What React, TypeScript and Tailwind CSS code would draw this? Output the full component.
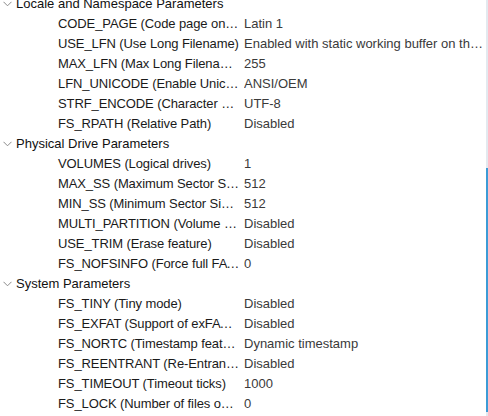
import React from 'react';

type Param = { name: string; value: string };
type Group = { title: string; items: Param[] };

const groups: Group[] = [
  {
    title: 'Locale and Namespace Parameters',
    items: [
      { name: 'CODE_PAGE (Code page on disk)', value: 'Latin 1' },
      { name: 'USE_LFN (Use Long Filename)', value: 'Enabled with static working buffer on the BSS' },
      { name: 'MAX_LFN (Max Long Filename)', value: '255' },
      { name: 'LFN_UNICODE (Enable Unicode)', value: 'ANSI/OEM' },
      { name: 'STRF_ENCODE (Character encoding)', value: 'UTF-8' },
      { name: 'FS_RPATH (Relative Path)', value: 'Disabled' },
    ],
  },
  {
    title: 'Physical Drive Parameters',
    items: [
      { name: 'VOLUMES (Logical drives)', value: '1' },
      { name: 'MAX_SS (Maximum Sector Size in bytes)', value: '512' },
      { name: 'MIN_SS (Minimum Sector Size in bytes)', value: '512' },
      { name: 'MULTI_PARTITION (Volume partitions)', value: 'Disabled' },
      { name: 'USE_TRIM (Erase feature)', value: 'Disabled' },
      { name: 'FS_NOFSINFO (Force full FAT scan)', value: '0' },
    ],
  },
  {
    title: 'System Parameters',
    items: [
      { name: 'FS_TINY (Tiny mode)', value: 'Disabled' },
      { name: 'FS_EXFAT (Support of exFAT file system)', value: 'Disabled' },
      { name: 'FS_NORTC (Timestamp feature)', value: 'Dynamic timestamp' },
      { name: 'FS_REENTRANT (Re-Entrancy)', value: 'Disabled' },
      { name: 'FS_TIMEOUT (Timeout ticks)', value: '1000' },
      { name: 'FS_LOCK (Number of files opened simultaneously)', value: '0' },
    ],
  },
];

function Chevron() {
  return (
    <svg width="9" height="6" viewBox="0 0 9 6" className="shrink-0">
      <path d="M0.5 0.8 L4.5 4.8 L8.5 0.8" fill="none" stroke="#8a8a8a" strokeWidth="1" />
    </svg>
  );
}

export default function App() {
  return (
    <div
      className="relative w-[488px] h-[416px] overflow-hidden bg-white text-[13px] leading-[20px]"
      style={{ fontFamily: '"Liberation Sans", Arial, sans-serif' }}
    >
      <div className="-mt-[6px]">
        {groups.map((g) => (
          <div key={g.title}>
            {/* Category row */}
            <div className="flex items-center h-[20px] pl-[3px] gap-[4px] text-[#111]">
              <Chevron />
              <span className="whitespace-nowrap">{g.title}</span>
            </div>
            {g.items.map((p) => (
              <div key={p.name} className="grid grid-cols-[244px_240px] h-[20px]">
                <div className="pl-[58px] pr-[4px] truncate text-[#1a1a1a] tracking-[-0.1px]">{p.name}</div>
                <div className="truncate text-[#3a3a3a]">{p.value}</div>
              </div>
            ))}
          </div>
        ))}
      </div>

      {/* scrollbar overlay */}
      <div className="absolute right-0 top-0 bottom-0 w-[2px] bg-[#e3e9ef]">
        <div className="absolute left-0 right-0 top-[168px] h-[244px] bg-[#3c9bd6]" />
      </div>
    </div>
  );
}
